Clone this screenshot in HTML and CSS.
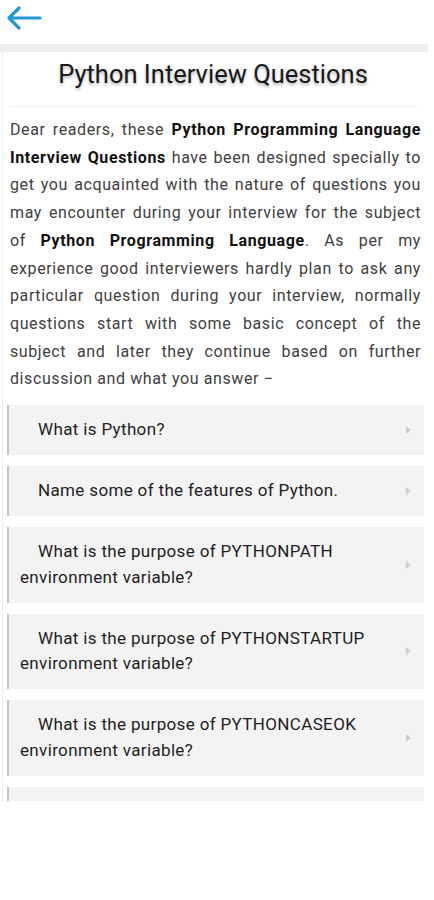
FILE: index.html
```html
<!DOCTYPE html>
<html>
<head>
<meta charset="utf-8">
<link rel="stylesheet" href="styles.css">
</head>
<body>
<header class="topbar">
  <svg class="back" width="36" height="24" viewBox="0 0 36 24">
    <path d="M3 12 H34 M13 2 L3 12 L13 22" fill="none" stroke="#1f97d8" stroke-width="3.2" stroke-linecap="round" stroke-linejoin="round"/>
  </svg>
</header>
<div class="strip"></div>
<main class="viewport">
  <section class="card">
    <h1 class="title">Python Interview Questions</h1>
    <p class="intro">Dear readers, these <b>Python Programming Language Interview Questions</b> have been designed specially to get you acquainted with the nature of questions you may encounter during your interview for the subject of <b>Python Programming Language</b>. As per my experience good interviewers hardly plan to ask any particular question during your interview, normally questions start with some basic concept of the subject and later they continue based on further discussion and what you answer −</p>
    <ul class="questions">
      <li class="q"><span class="qt">What is Python?</span><i class="chev"></i></li>
      <li class="q"><span class="qt">Name some of the features of Python.</span><i class="chev"></i></li>
      <li class="q"><span class="qt">What is the purpose of PYTHONPATH environment variable?</span><i class="chev"></i></li>
      <li class="q"><span class="qt">What is the purpose of PYTHONSTARTUP environment variable?</span><i class="chev"></i></li>
      <li class="q"><span class="qt">What is the purpose of PYTHONCASEOK environment variable?</span><i class="chev"></i></li>
      <li class="q q-empty"></li>
    </ul>
  </section>
</main>
</body>
</html>
```

FILE: styles.css
```css
* { box-sizing: border-box; }
html, body { margin: 0; padding: 0; background: #fff; }
body {
  font-family: Roboto, "Noto Sans", sans-serif;
  width: 434px;
  height: 900px;
  overflow: hidden;
}
.topbar {
  height: 44px;
  display: flex;
  align-items: flex-start;
  padding: 6px 0 0 6px;
}
.back { display: block; }
.strip {
  height: 8px;
  background: #eeeeee;
  margin-right: 6px;
}
.viewport {
  height: 749px;
  overflow: hidden;
}
.card {
  border-left: 1px solid #ececec;
  margin-left: 2px;
  margin-right: 6px;
}
.title {
  margin: 0 11px 0 6px;
  padding: 8px 0 18px;
  font-size: 25.5px;
  line-height: 28px;
  font-weight: 400;
  text-align: center;
  color: #1a1a1a;
  text-shadow: 0 2px 3px rgba(0, 0, 0, 0.3);
  border-bottom: 1px solid #ececec;
}
.intro {
  margin: 9px 0 0;
  padding: 0 7px 0 7px;
  font-size: 16px;
  line-height: 27.7px;
  letter-spacing: 0.6px;
  color: #404040;
  text-align: justify;
}
.intro b { color: #111; font-weight: 700; }
.questions {
  list-style: none;
  margin: 12px 4px 0 4px;
  padding: 0;
  display: flex;
  flex-direction: column;
  gap: 11px;
}
.q {
  position: relative;
  background: #f3f3f3;
  border-left: 2px solid #c4c4c4;
  padding: 12.25px 34px 12.25px 11px;
  font-size: 17px;
  line-height: 25.5px;
  letter-spacing: 0.35px;
  color: #1e1e1e;
  text-indent: 18px;
}
.q-empty { height: 50px; }
.chev {
  position: absolute;
  right: 13px;
  top: 50%;
  margin-top: -4px;
  width: 0;
  height: 0;
  border-left: 5px solid #cccccc;
  border-top: 4.5px solid transparent;
  border-bottom: 4.5px solid transparent;
}
```
